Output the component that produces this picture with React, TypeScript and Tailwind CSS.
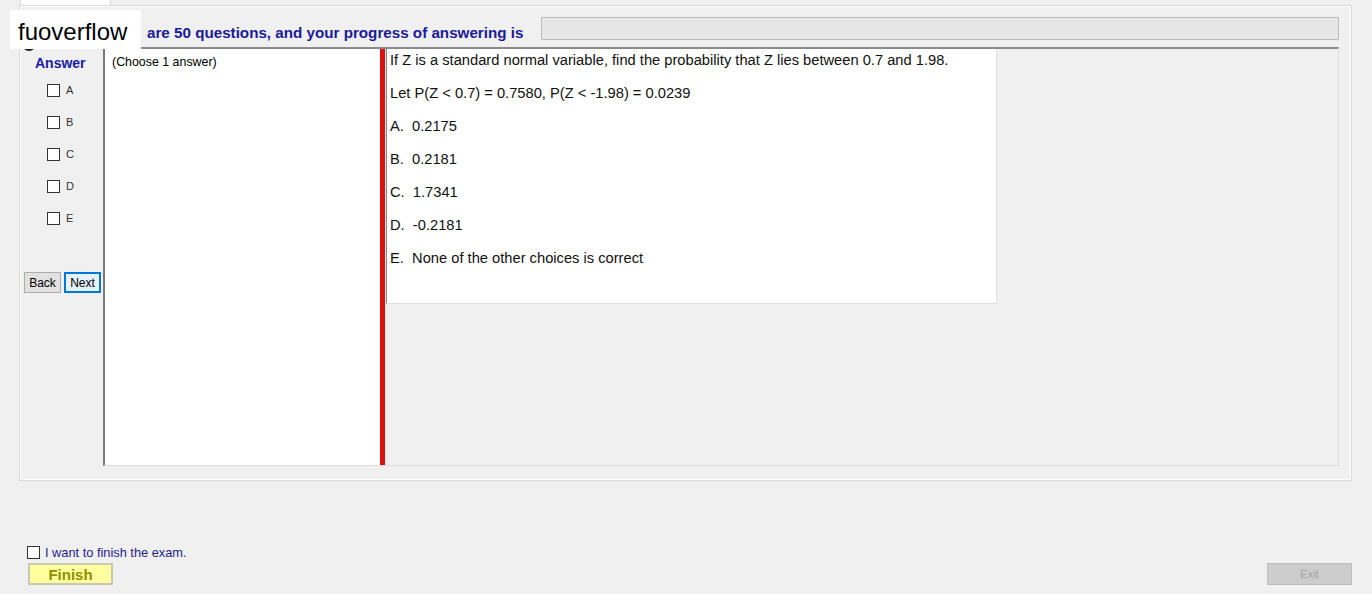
import React from 'react'

const answers = ['A', 'B', 'C', 'D', 'E']

const questionLines = [
  'If Z is a standard normal variable, find the probability that Z lies between 0.7 and 1.98.',
  'Let P(Z < 0.7) = 0.7580, P(Z < -1.98) = 0.0239',
  'A.  0.2175',
  'B.  0.2181',
  'C.  1.7341',
  'D.  -0.2181',
  'E.  None of the other choices is correct',
]

function Box() {
  return <span className="block w-[13px] h-[13px] border border-[#333] bg-white" />
}

export default function App() {
  return (
    <div className="relative w-[1372px] h-[594px] overflow-hidden bg-[#f0f0f0] font-['Liberation_Sans',Arial,sans-serif] text-black">
      {/* tab strip */}
      <div className="h-[5px] pl-[20px] flex">
        <div className="w-[91px] h-[5px] bg-white border-x border-[#d9d9d9]" />
      </div>

      {/* tab page */}
      <div className="ml-[19px] w-[1333px] h-[476px] border border-[#dadada] shadow-[inset_1px_1px_0_#fff,inset_-1px_-1px_0_#fff] flex flex-col">
        {/* header */}
        <div className="mt-[11px] h-[23px] flex items-start pr-[12px]">
          <div className="pl-[127px] w-[521px] pt-[8px] text-[15.2px] leading-[15px] font-bold text-[#1a1a9a] whitespace-nowrap">
            are 50 questions, and your progress of answering is
          </div>
          <div className="flex-1 h-[23px] bg-[#e6e6e6] border border-[#bcbcbc]" />
        </div>

        {/* body */}
        <div className="mt-[7px] h-[419px] flex">
          {/* answer column */}
          <div className="w-[83px] flex flex-col">
            <div className="pl-[15px] pt-[9px] leading-[14px] text-[14px] font-bold text-[#1a1aa8]">Answer</div>
            <div className="mt-[4px] flex flex-col">
              {answers.map((a) => (
                <label key={a} className="h-[32px] pl-[27px] flex items-center gap-[6px] text-[11px] text-[#333]">
                  <Box />
                  <span>{a}</span>
                </label>
              ))}
            </div>
            <div className="mt-[38px] pl-[4px] flex gap-[3px]">
              <button className="w-[37px] h-[21px] bg-[#e1e1e1] border border-[#adadad] text-[12px] leading-none">Back</button>
              <button className="w-[37px] h-[21px] bg-[#e5f1fb] border-2 border-[#0078d7] text-[12px] leading-none">Next</button>
            </div>
          </div>

          {/* sunken container */}
          <div className="flex-1 mr-[12px] flex border-t-2 border-l-2 border-t-[#8a8a8a] border-l-[#7a7a7a] border-b border-r border-b-[#dcdcdc] border-r-[#dcdcdc]">
            <div className="w-[275px] bg-white pl-[7px] pt-[6px] text-[12.4px] leading-[14px]">(Choose 1 answer)</div>
            <div className="w-[5px] bg-[#dd1111]" />
            <div className="w-[1px] bg-[#e8e8e8]" />
            <div className="w-[611px] h-[255px] bg-white border-l border-[#8a8a8a] border-r border-b border-r-[#e0e0e0] border-b-[#e0e0e0] pl-[3px] pt-[3px] flex flex-col gap-[16px]">
              {questionLines.map((l, i) => (
                <div key={i} className="text-[14.7px] leading-[17px] text-[#111] whitespace-pre">{l}</div>
              ))}
            </div>
          </div>
        </div>
      </div>

      {/* footer */}
      <div className="mt-[64px] flex flex-col">
        <label className="pl-[27px] h-[14px] flex items-center gap-[5px] text-[12.8px] text-[#1e1e8c]">
          <Box />
          <span className="mt-[2px]">I want to finish the exam.</span>
        </label>
        <div className="mt-[4px] pl-[28px] pr-[20px] flex justify-between">
          <button className="w-[85px] h-[22px] bg-[#ffff9e] border-2 border-[#c8c8b4] text-[15px] font-bold text-[#8f8f00] leading-none">Finish</button>
          <button className="w-[85px] h-[22px] bg-[#cccccc] border border-[#bdbdbd] text-[11px] text-[#a3a3a3] leading-none">Exit</button>
        </div>
      </div>

      {/* watermark */}
      <div className="absolute left-[22px] top-[37px] w-[14px] h-[14px] rounded-full bg-[#222]" />
      <div className="absolute left-[10px] top-[10px] w-[131px] h-[39px] bg-white pl-[8px] pt-[4px] flex items-center text-[24px] leading-none text-black">
        fuoverflow
      </div>
    </div>
  )
}
